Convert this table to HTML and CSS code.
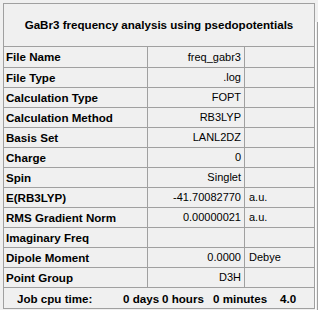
FILE: index.html
```html
<!DOCTYPE html>
<html lang="en">
<head>
    <meta charset="UTF-8">
    <title>Summary</title>
    <link rel="stylesheet" href="styles.css">
</head>
<body>
    <div class="window">
        <div class="panel">
            <div class="title">GaBr3 frequency analysis using psedopotentials</div>
            <table class="summary">
                <tr><th>File Name</th><td class="val">freq_gabr3</td><td class="unit"></td></tr>
                <tr><th>File Type</th><td class="val">.log</td><td class="unit"></td></tr>
                <tr><th>Calculation Type</th><td class="val">FOPT</td><td class="unit"></td></tr>
                <tr><th>Calculation Method</th><td class="val">RB3LYP</td><td class="unit"></td></tr>
                <tr><th>Basis Set</th><td class="val">LANL2DZ</td><td class="unit"></td></tr>
                <tr><th>Charge</th><td class="val">0</td><td class="unit"></td></tr>
                <tr><th>Spin</th><td class="val">Singlet</td><td class="unit"></td></tr>
                <tr><th>E(RB3LYP)</th><td class="val">-41.70082770</td><td class="unit">a.u.</td></tr>
                <tr><th>RMS Gradient Norm</th><td class="val">0.00000021</td><td class="unit">a.u.</td></tr>
                <tr><th>Imaginary Freq</th><td class="val"></td><td class="unit"></td></tr>
                <tr><th>Dipole Moment</th><td class="val">0.0000</td><td class="unit">Debye</td></tr>
                <tr><th>Point Group</th><td class="val">D3H</td><td class="unit"></td></tr>
            </table>
            <div class="footer">
                <span class="job">Job cpu time:</span>
                <span class="days">0 days</span>
                <span class="hours">0 hours</span>
                <span class="mins">0 minutes</span>
                <span class="secs">4.0</span>
            </div>
        </div>
        <div class="edge"></div>
    </div>
</body>
</html>
```

FILE: styles.css
```css
body {
    margin: 0;
    background: #f0f0f0;
    font-family: "Liberation Sans", Arial, sans-serif;
    font-size: 11px;
    color: #000;
}

.window {
    display: flex;
    padding: 3px 0 0 3px;
    height: 307px;
}

.panel {
    width: 310px;
    height: 304px;
    border: 1px solid #a0a0a0;
    display: flex;
    flex-direction: column;
}

.edge {
    margin-top: 19px;
    width: 1px;
    border-left: 1px solid #ffffff;
    border-right: 1px solid #a0a0a0;
}

.title {
    height: 42px;
    line-height: 42px;
    text-align: center;
    font-weight: bold;
    font-size: 11.6px;
    border-bottom: 1px solid #a0a0a0;
}

.summary {
    border-collapse: collapse;
    table-layout: fixed;
    width: 310px;
}

.summary tr {
    height: 20px;
}

.summary th,
.summary td {
    padding: 0;
    border-bottom: 1px solid #a0a0a0;
    white-space: nowrap;
    overflow: hidden;
    height: 19px;
}

.summary th {
    width: 141px;
    padding-left: 2px;
    text-align: left;
    font-weight: bold;
    font-size: 11.6px;
    border-right: 1px solid #a0a0a0;
}

.summary .val {
    width: 93px;
    padding-right: 3px;
    text-align: right;
    border-right: 1px solid #a0a0a0;
}

.summary .unit {
    padding-left: 4px;
}

.footer {
    flex: 1;
    display: flex;
    align-items: center;
    padding-top: 1px;
    font-weight: bold;
    font-size: 11.6px;
    white-space: nowrap;
}

.job {
    margin-left: 13px;
    width: 106px;
}

.days {
    width: 39px;
}

.hours {
    width: 51px;
}

.mins {
    width: 67px;
}
```
